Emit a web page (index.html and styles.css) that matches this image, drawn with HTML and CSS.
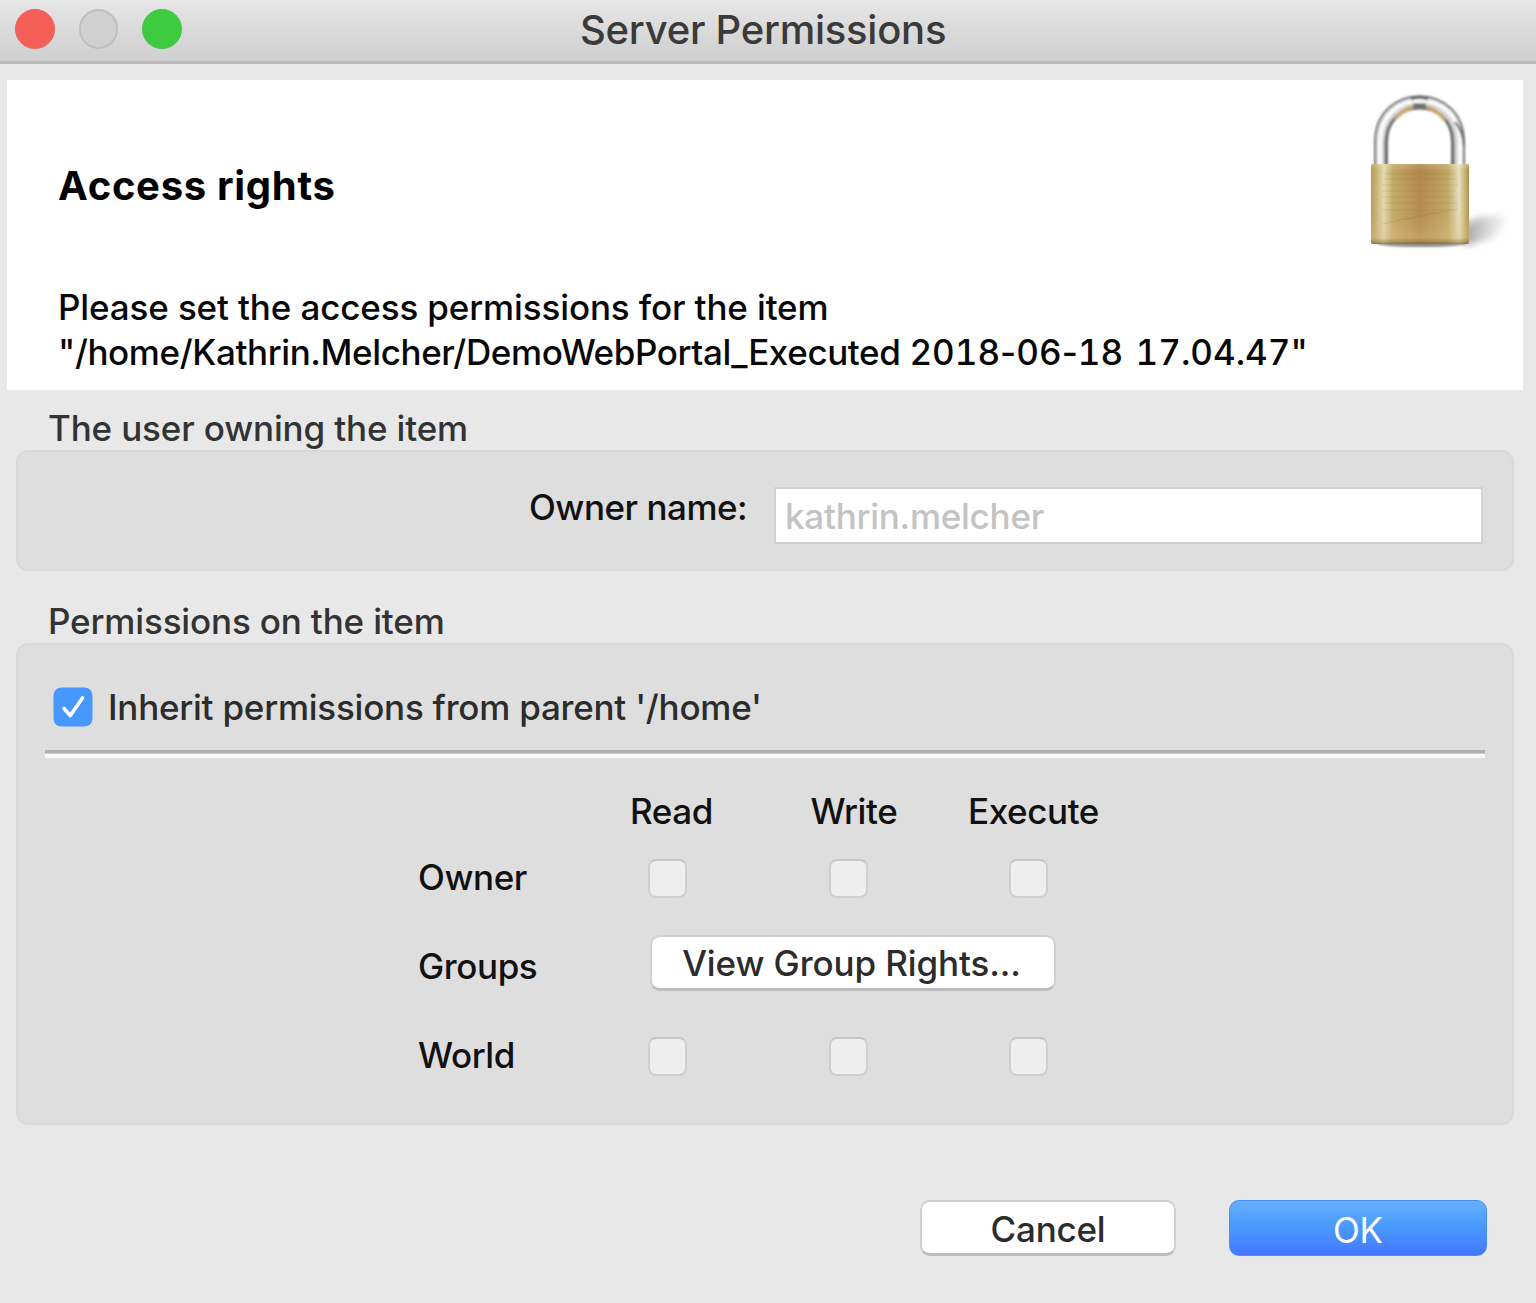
FILE: index.html
```html
<!DOCTYPE html>
<html lang="en">
<head>
<meta charset="utf-8">
<title>Server Permissions</title>
<link rel="stylesheet" href="styles.css">
</head>
<body>
<div class="window">
  <header class="titlebar">
    <div class="lights"><span class="light close"></span><span class="light minimize"></span><span class="light zoom"></span></div>
    <h1 class="title">Server Permissions</h1>
  </header>
  <section class="banner">
    <div class="banner-text">
      <h2 class="heading">Access rights</h2>
      <p class="message">Please set the access permissions for the item<br><span class="path">"/home/Kathrin.Melcher/DemoWebPortal_Executed <span class="stamp"><span class="num">2018</span>-<span class="num">06</span>-<span class="num">18</span> <span class="num">17.04.47</span>"</span></span></p>
    </div>
    <svg class="lock" width="144" height="164" viewBox="1366 90 144 164" aria-hidden="true">
      <defs>
        <linearGradient id="brass" x1="0" x2="1" y1="0" y2="0">
          <stop offset="0" stop-color="#b39a58"/><stop offset=".05" stop-color="#c4ae70"/>
          <stop offset=".13" stop-color="#e3d9b0"/><stop offset=".22" stop-color="#c2a965"/>
          <stop offset=".5" stop-color="#b0854b"/><stop offset=".78" stop-color="#bfa562"/>
          <stop offset=".9" stop-color="#e8dfbc"/><stop offset=".96" stop-color="#c8b070"/><stop offset="1" stop-color="#a88e4c"/>
        </linearGradient>
        <linearGradient id="sheen" x1="0" x2="0" y1="0" y2="1">
          <stop offset="0" stop-color="#fff" stop-opacity=".18"/><stop offset=".08" stop-color="#fff" stop-opacity="0"/>
          <stop offset=".62" stop-color="#dcc38c" stop-opacity=".1"/><stop offset=".92" stop-color="#dcc38c" stop-opacity=".4"/>
          <stop offset="1" stop-color="#6a5328" stop-opacity=".6"/>
        </linearGradient>
        <linearGradient id="cast" x1="0" x2="1" y1="0" y2="0">
          <stop offset="0" stop-color="#777" stop-opacity=".7"/><stop offset="1" stop-color="#aaa" stop-opacity=".15"/>
        </linearGradient>
        <filter id="soft" x="-30%" y="-40%" width="160%" height="180%"><feGaussianBlur stdDeviation="3.5"/></filter>
        <filter id="edge" x="-10%" y="-50%" width="120%" height="200%"><feGaussianBlur stdDeviation=".9"/></filter>
      </defs>
      <path d="M1464 224Q1486 212 1504 217Q1507 229 1489 239L1464 246Z" fill="url(#cast)" filter="url(#soft)"/>
      <ellipse cx="1421" cy="243.500" rx="45" ry="3.500" fill="#4b4235" opacity=".6" filter="url(#edge)"/>
      <g fill="none" filter="url(#edge)">
        <path d="M1381 168V142C1381 89 1458 89 1458 142V168" stroke="#747474" stroke-width="14"/>
        <path d="M1381 168V142C1381 89 1458 89 1458 142V168" stroke="#d4d4d4" stroke-width="10"/>
        <path d="M1380 168V142C1380 87 1460 87 1460 142V168" stroke="#fbfbfb" stroke-width="4"/>
        <path d="M1386 168V143C1386 96 1453 96 1453 143V168" stroke="#6a6a6a" stroke-width="3"/>
        <path d="M1395 119Q1404 109 1413 107M1427 107Q1437 110 1445 120" stroke="#c7a767" stroke-width="3.500"/>
        <path d="M1411 99Q1419 96 1428 99M1413 105H1426" stroke="#666" stroke-width="3"/>
        <path d="M1455 122Q1463 131 1464 146" stroke="#606060" stroke-width="2"/>
      </g>
      <rect x="1371" y="164" width="98" height="80" rx="2" fill="url(#brass)"/>
      <g stroke="#94763a" opacity=".22">
        <path d="M1386 174H1454M1383 179H1457M1382 185H1458M1383 191H1456M1382 197H1454M1383 203H1458M1382 210H1456M1382 224L1408 218L1458 209"/>
      </g>
      <rect x="1371" y="164" width="98" height="80" rx="2" fill="url(#sheen)"/>
    </svg>
  </section>

  <h3 class="group-label">The user owning the item</h3>
  <section class="panel owner-panel">
    <label class="owner-label" for="owner">Owner name:</label>
    <input class="owner-input" id="owner" value="kathrin.melcher" disabled>
  </section>

  <h3 class="group-label second">Permissions on the item</h3>
  <section class="panel perm-panel">
    <div class="inherit">
      <svg class="checked" width="40" height="40" viewBox="0 0 40 40" aria-hidden="true"><rect x=".5" y=".5" width="39" height="39" rx="8" fill="#4798fd"/><path d="M11 21.5L17.3 28.5L29.5 11" fill="none" stroke="#fff" stroke-width="3.6" stroke-linecap="round" stroke-linejoin="round"/></svg>
      <span>Inherit permissions from parent '/home'</span>
    </div>
    <div class="rule"></div>
    <div class="matrix">
      <span></span><span class="col">Read</span><span class="col">Write</span><span class="col col-wide">Execute</span>
      <span class="row">Owner</span><i class="box"></i><i class="box"></i><i class="box"></i>
      <span class="row">Groups</span><button class="btn group-btn">View Group Rights...</button>
      <span class="row">World</span><i class="box"></i><i class="box"></i><i class="box"></i>
    </div>
  </section>

  <footer class="actions">
    <button class="btn cancel">Cancel</button>
    <button class="btn ok">OK</button>
  </footer>
</div>
</body>
</html>
```
FILE: styles.css
```css
* { box-sizing: border-box; }
body { margin: 0; background: #e8e8e8; }
.window {
  display: flex;
  flex-direction: column;
  width: 1536px;
  height: 1303px;
  overflow: hidden;
  font-family: Inter, "Liberation Sans", sans-serif;
  font-size: 35px;
  font-weight: 450;
  line-height: 44px;
  letter-spacing: -0.15px;
  color: #111;
  white-space: nowrap;
}
h1, h2, h3, p { margin: 0; font: inherit; }

.titlebar {
  display: grid;
  grid-template-columns: 580px 1fr;
  align-items: start;
  height: 64px;
  background: linear-gradient(#e6e6e6, #cfcfcf 60px);
  border-bottom: 3px solid #bbb;
}
.lights { display: flex; gap: 24px; padding: 9px 0 0 15px; }
.light { width: 39.5px; height: 39.5px; border-radius: 50%; }
.close { background: #f55f57; border: 1px solid #e9645e; }
.minimize { background: #d0d0d0; border: 2px solid #bfbfbf; }
.zoom { background: #3dcb40; border: 1px solid #4bc34c; }
.title { padding-top: 8px; font-size: 40px; letter-spacing: -0.25px; color: #3a3a3a; }

.banner {
  display: flex;
  justify-content: space-between;
  width: 1516px;
  height: 310px;
  margin: 16px 0 0 7px;
  padding: 10px 13px 0 51px;
  background: #fff;
}
.heading { padding-top: 74px; font-size: 40px; font-weight: 700; letter-spacing: 0.7px; color: #000; }
.message { padding-top: 77px; line-height: 44.5px; color: #080808; letter-spacing: -0.13px; }
.path { letter-spacing: -0.39px; }
.stamp { letter-spacing: 0; word-spacing: 3px; }
.num { font-variant-numeric: tabular-nums; }
.lock { flex: none; }

.group-label { height: 60px; padding: 16px 0 0 48px; color: #333; }
.second { height: 72px; padding-top: 28px; }
.panel {
  width: 1498px;
  margin-left: 16px;
  background: #dedede;
  border: 2px solid #d9d9d9;
  border-radius: 12px;
}
.owner-panel {
  display: flex;
  align-items: flex-start;
  height: 121px;
  padding: 35px 29px 0 511px;
}
.owner-label { width: 245px; margin-top: -2px; letter-spacing: -0.48px; }
.owner-input {
  width: 709px;
  height: 57px;
  padding: 1px 0 0 9px;
  border: 2px solid #d2d2d2;
  background: #fff;
  font: inherit;
  letter-spacing: -0.25px;
  color: #c3c3c3;
}
.perm-panel { height: 482px; padding: 40px 27px 0; }
.inherit { display: flex; align-items: center; gap: 15px; padding-left: 8px; letter-spacing: -0.23px; color: #2c2c2c; }
.rule { height: 8px; margin-top: 21px; border-top: 3px solid #b0b0b0; border-bottom: 4px solid #f8f8f8; background: #c8c8c8; }
.matrix {
  display: grid;
  grid-template-columns: 159px repeat(3, 180.5px);
  grid-template-rows: 46px 89px 89px 89px;
  padding: 30px 0 0 373px;
  align-items: center;
  letter-spacing: -0.4px;
}
.col { padding-left: 53px; }
.col-wide { padding-left: 30px; }
.row { padding-bottom: 3px; }
.box {
  justify-self: center;
  margin-left: 1px;
  width: 39px;
  height: 39px;
  border: 2px solid #cfcfcf;
  border-top-color: #c6c6c6;
  border-radius: 8px;
  background: #eee;
}
.btn {
  display: block;
  height: 56px;
  padding: 0;
  border: 2px solid #d0d0d0;
  border-bottom: 3px solid #bcbcbc;
  border-radius: 10px;
  background: #fff;
  font: inherit;
  letter-spacing: -0.2px;
  color: #2c2c2c;
}
.group-btn { grid-column: 2 / 5; width: 406px; margin: -9px 0 0 73px; padding-right: 3px; letter-spacing: -0.1px; }
.actions { display: flex; gap: 53px; padding: 75px 0 0 920px; }
.cancel { width: 256px; padding-top: 2px; }
.ok { width: 258px; padding-top: 3px; border: 1px solid #4b8df5; background: linear-gradient(#66b0fa, #4a9bfd 45%, #4478ff); font-weight: 400; color: #fff; }
```
